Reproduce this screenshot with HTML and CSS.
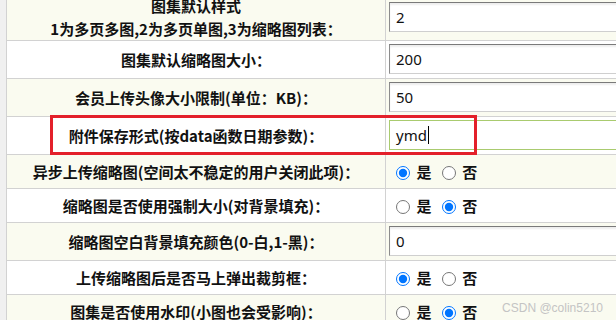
FILE: index.html
```html
<!DOCTYPE html>
<html lang="zh-CN">
<head>
<meta charset="utf-8">
<title>附件设置</title>
<link rel="stylesheet" href="styles.css">
</head>
<body>
<div class="page">
  <table class="cfg">
    <colgroup><col class="c-lbl"><col class="c-val"></colgroup>
    <tr class="cream">
      <td class="lbl two">图集默认样式<br>1为多页多图,2为多页单图,3为缩略图列表：</td>
      <td class="val"><input class="field" type="text" value="2"></td>
    </tr>
    <tr>
      <td class="lbl">图集默认缩略图大小：</td>
      <td class="val"><input class="field" type="text" value="200"></td>
    </tr>
    <tr class="cream">
      <td class="lbl">会员上传头像大小限制(单位：KB)：</td>
      <td class="val"><input class="field" type="text" value="50"></td>
    </tr>
    <tr>
      <td class="lbl">附件保存形式(按data函数日期参数)：</td>
      <td class="val"><div class="field focused">ymd<span class="caret"></span></div></td>
    </tr>
    <tr class="cream radio-row">
      <td class="lbl">异步上传缩略图(空间太不稳定的用户关闭此项)：</td>
      <td class="val"><input type="radio" name="r1" checked> 是 <input type="radio" name="r1"> 否</td>
    </tr>
    <tr class="radio-row">
      <td class="lbl">缩略图是否使用强制大小(对背景填充)：</td>
      <td class="val"><input type="radio" name="r2"> 是 <input type="radio" name="r2" checked> 否</td>
    </tr>
    <tr class="cream">
      <td class="lbl">缩略图空白背景填充颜色(0-白,1-黑)：</td>
      <td class="val"><input class="field" type="text" value="0"></td>
    </tr>
    <tr class="radio-row">
      <td class="lbl">上传缩略图后是否马上弹出裁剪框：</td>
      <td class="val"><input type="radio" name="r3" checked> 是 <input type="radio" name="r3"> 否</td>
    </tr>
    <tr class="cream radio-row">
      <td class="lbl">图集是否使用水印(小图也会受影响)：</td>
      <td class="val"><input type="radio" name="r4"> 是 <input type="radio" name="r4" checked> 否</td>
    </tr>
  </table>
  <div class="highlight"></div>
  <div class="watermark">CSDN @colin5210</div>
</div>
</body>
</html>
```
FILE: styles.css
```css
html, body {
  margin: 0;
  padding: 0;
  background: #f0f0f0;
  overflow: hidden;
}
.page {
  position: relative;
  width: 616px;
  height: 320px;
  overflow: hidden;
  font-family: "Noto Sans CJK SC", "Noto Sans", sans-serif;
  font-size: 15px;
  font-weight: 700;
  color: #111;
}
.cfg {
  border-collapse: collapse;
  table-layout: fixed;
  width: 800px;
  margin: -7px 0 0 6px;
  background: #fff;
}
.c-lbl { width: 379px; }
.c-val { width: 421px; }
.cfg td {
  border: 1px solid #d2d2d2;
  padding: 0 5px;
  vertical-align: middle;
  line-height: 23px;
}
.cfg tr.cream td { background: #fafbf0; }
.lbl { text-align: center; }
.val { padding: 0 5px 0 3px !important; }
.radio-row td { height: 33px; }
.field {
  display: block;
  box-sizing: border-box;
  width: 420px;
  height: 30px;
  margin: 3px 0 4px;
  padding: 0 6px;
  border: 1px solid;
  border-color: #7a7a7a #cfcfcf #cfcfcf #8c8c8c;
  box-shadow: inset 0 2px 2px rgba(0, 0, 0, 0.07);
  background: #fff;
  font-family: "Noto Sans", sans-serif;
  font-weight: 400;
  font-size: 15px;
  color: #111;
  line-height: 28px;
  outline: none;
}
.field.focused {
  border-color: #a9cb6f;
  box-shadow: none;
}
.caret {
  display: inline-block;
  width: 1px;
  height: 18px;
  background: #000;
  vertical-align: -3px;
  margin-left: 1px;
}
.val input[type="radio"] {
  width: 14px;
  height: 14px;
  margin: 0 3px 0 7px;
  vertical-align: -2px;
}
.highlight {
  position: absolute;
  left: 50px;
  top: 115px;
  width: 421px;
  height: 34px;
  border: 3px solid #e3202a;
}
.watermark {
  position: absolute;
  right: 13px;
  bottom: 5px;
  font-family: "Liberation Sans", sans-serif;
  font-weight: 400;
  font-size: 12px;
  color: #c4c4c4;
}
```
